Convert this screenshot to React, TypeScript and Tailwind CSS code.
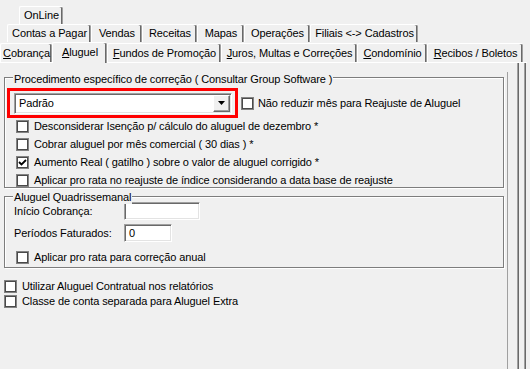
import React from "react";

const Check = ({ checked = false }: { checked?: boolean }) => (
  <span className="w-[13px] h-[13px] shrink-0 bg-white border border-[#838383] shadow-[inset_1px_1px_0_#4a4a4a,inset_-1px_-1px_0_#4a4a4a] flex items-center justify-center">
    {checked && (
      <svg width="9" height="9" viewBox="0 0 9 9">
        <path d="M1 4 L3.5 6.5 L8 2" stroke="#000" strokeWidth="1.8" fill="none" />
      </svg>
    )}
  </span>
);

const Tab = ({
  w,
  children,
  selected = false,
  h = 19,
}: {
  w: number;
  children: React.ReactNode;
  selected?: boolean;
  h?: number;
}) => (
  <div
    style={{ width: w, height: h }}
    className={
      "flex items-center justify-center shrink-0 bg-[#f0f0f0] border-t border-l border-white rounded-tl-[2px] rounded-tr-[2px] shadow-[inset_-1px_0_0_#a0a0a0,inset_-2px_0_0_#696969] whitespace-nowrap " +
      (selected ? "relative z-10 -mb-[1px] pb-[1px]" : "")
    }
  >
    {children}
  </div>
);

const U = ({ c }: { c: string }) => <span className="underline underline-offset-[1px]">{c}</span>;

const Row = ({ checked = false, children }: { checked?: boolean; children: React.ReactNode }) => (
  <div className="h-[18px] flex items-center gap-[5px] pl-[11px]">
    <Check checked={checked} />
    <span>{children}</span>
  </div>
);

const sunken =
  "bg-white border border-t-[#a0a0a0] border-l-[#a0a0a0] border-b-white border-r-white shadow-[inset_1px_1px_0_#696969,inset_-1px_-1px_0_#e3e3e3]";

export default function App() {
  return (
    <div className="w-[530px] h-[369px] overflow-hidden bg-[#f0f0f0] text-black font-['Liberation_Sans',Arial,sans-serif] text-[11px] leading-[13px] tracking-[-0.11px] flex flex-col">
      {/* Tab rows */}
      <div className="flex pl-[19px] pt-[6px]">
        <Tab w={44} h={18}>OnLine</Tab>
      </div>
      <div className="flex pl-[7px]">
        <Tab w={84} h={18}>Contas a Pagar</Tab>
        <Tab w={51} h={18}>Vendas</Tab>
        <Tab w={55} h={18}>Receitas</Tab>
        <Tab w={47} h={18}>Mapas</Tab>
        <Tab w={66} h={18}>Operações</Tab>
        <Tab w={108} h={18}>Filiais &lt;-&gt; Cadastros</Tab>
      </div>
      <div className="flex items-end h-[20px]">
        <Tab w={52}>
          <U c="C" />obrança
        </Tab>
        <Tab w={55} h={21} selected>
          <U c="A" />luguel
        </Tab>
        <Tab w={114}>
          <U c="F" />undos de Promoção
        </Tab>
        <Tab w={136}>
          <U c="J" />uros, Multas e Correções
        </Tab>
        <Tab w={70}>
          <U c="C" />ondomínio
        </Tab>
        <Tab w={96}>
          <U c="R" />ecibos / Boletos
        </Tab>
      </div>

      {/* Page */}
      <div className="flex flex-1 border-t border-white w-[527px]">
        <div className="w-[507px] flex flex-col">
          {/* Group 1 */}
          <div className="relative mt-[14px] ml-[4px] w-[500px] h-[111px] border border-[#7d7d7d] shadow-[inset_1px_1px_0_#fff,1px_1px_0_#fff]">
            <span className="absolute left-[8px] -top-[5px] px-[1px] bg-[#f0f0f0]">
              Procedimento específico de correção ( Consultar Group Software )
            </span>
            <div className="mt-[10px] flex items-center">
              <div className="ml-[2px] w-[231px] h-[30px] border-[3px] border-[#f00] flex items-center pl-[4px]">
                <div className={"w-[218px] h-[21px] flex items-center " + sunken}>
                  <span className="flex-1 pl-[4px]">Padrão</span>
                  <div className="w-[17px] h-[17px] mr-[1px] bg-[#f0f0f0] border border-t-white border-l-white border-b-[#696969] border-r-[#696969] shadow-[inset_-1px_-1px_0_#a0a0a0] flex items-center justify-center">
                    <svg width="7" height="4" viewBox="0 0 7 4">
                      <path d="M0 0 H7 L3.5 4 Z" fill="#000" />
                    </svg>
                  </div>
                </div>
              </div>
              <div className="flex items-center gap-[4px] ml-[3px]">
                <Check />
                <span>Não reduzir mês para Reajuste de Aluguel</span>
              </div>
            </div>
            <div className="-mt-[1px]">
              <Row>Desconsiderar Isenção p/ cálculo do aluguel de dezembro *</Row>
              <Row>Cobrar aluguel por mês comercial ( 30 dias ) *</Row>
              <Row checked>Aumento Real ( gatilho ) sobre o valor de aluguel corrigido *</Row>
              <Row>Aplicar pro rata no reajuste de índice considerando a data base de reajuste</Row>
            </div>
          </div>

          {/* Group 2 */}
          <div className="relative mt-[8px] ml-[4px] w-[500px] h-[72px] border border-[#7d7d7d] shadow-[inset_1px_1px_0_#fff,1px_1px_0_#fff]">
            <span className="absolute left-[8px] -top-[6px] px-[1px] bg-[#f0f0f0]">Aluguel Quadrissemanal</span>
            <div className="mt-[5px] h-[18px] flex items-center pl-[9px]">
              <span className="w-[110px]">Início Cobrança:</span>
              <div className={"w-[76px] h-[18px] " + sunken} />
            </div>
            <div className="mt-[4px] h-[18px] flex items-center pl-[9px]">
              <span className="w-[110px]">Períodos Faturados:</span>
              <div className={"w-[48px] h-[18px] flex items-center pl-[4px] " + sunken}>0</div>
            </div>
            <div className="mt-[6px]">
              <Row>Aplicar pro rata para correção anual</Row>
            </div>
          </div>

          {/* Bottom checks */}
          <div className="mt-[11px] flex flex-col">
            <div className="h-[15px] flex items-center gap-[5px] pl-[4px]">
              <Check />
              <span>Utilizar Aluguel Contratual nos relatórios</span>
            </div>
            <div className="h-[15px] flex items-center gap-[5px] pl-[4px]">
              <Check />
              <span>Classe de conta separada para Aluguel Extra</span>
            </div>
          </div>
        </div>
        {/* Right edge lines */}
        <div className="w-[1px] mt-[9px] bg-[#a0a0a0]" />
        <div className="w-[9px]" />
        <div className="w-[1px] bg-[#a0a0a0]" />
        <div className="w-[1px] bg-[#696969]" />
        <div className="w-[5px]" />
        <div className="w-[1px] bg-[#a0a0a0]" />
        <div className="w-[1px] bg-[#696969]" />
      </div>
    </div>
  );
}
